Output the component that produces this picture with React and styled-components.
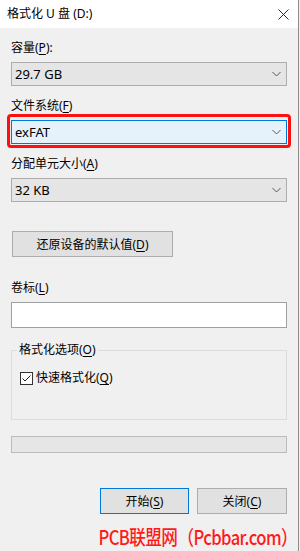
import React from "react";
import styled, { createGlobalStyle } from "styled-components";

const Global = createGlobalStyle`
  html, body { margin: 0; padding: 0; background: #f0f0f0; }
  body { width: 300px; height: 551px; overflow: hidden; }
  * { box-sizing: border-box; }
`;

const ui = `"Segoe UI", "Noto Sans", "Noto Sans CJK SC", sans-serif`;

const Window = styled.div`
  width: 299px;
  height: 551px;
  border-right: 1px solid #8c8c8c;
  background: #f0f0f0;
  font-family: ${ui};
  font-size: 12px;
  color: #000;
  display: flex;
  flex-direction: column;
`;

const TitleBar = styled.div`
  height: 28px;
  background: #fff;
  display: flex;
  align-items: center;
  justify-content: space-between;
  padding: 0 9px 0 7px;
  flex: none;
`;

const Title = styled.span`
  font-size: 12px;
  line-height: 16px;
  font-family: "Noto Sans", "Noto Sans CJK SC", sans-serif;
`;

const Content = styled.div`
  padding: 12px 11px 0 11px;
  display: flex;
  flex-direction: column;
`;

const Label = styled.div`
  line-height: 16px;
  height: 16px;
  margin-top: ${(p) => p.$mt || 0}px;
  white-space: nowrap;
  u { text-decoration: underline; text-underline-offset: 2px; }
`;

const ComboWrap = styled.div`
  position: relative;
  margin-top: 6px;
  ${(p) =>
    p.$marked &&
    `&::after {
      content: "";
      position: absolute;
      left: -4px; right: -4px; top: -6px; bottom: -4px;
      border: 3px solid #ff1010;
      border-radius: 4px;
      pointer-events: none;
    }`}
`;

const Combo = styled.div`
  height: 24px;
  border: 1px solid ${(p) => (p.$focus ? "#0078d7" : "#adadad")};
  background: ${(p) => (p.$focus ? "#e5f1fb" : "#e5e5e5")};
  display: flex;
  align-items: center;
  justify-content: space-between;
  padding: 0 5px 0 3px;
  font-family: "Noto Sans", "Noto Sans CJK SC", sans-serif;
  font-size: 13px;
`;

const Chevron = () => (
  <svg width="9" height="6" viewBox="0 0 9 6">
    <path d="M0.5 1 L4.5 5 L8.5 1" fill="none" stroke="#5a5a5a" strokeWidth="1" />
  </svg>
);

const Button = styled.button`
  height: 26px;
  width: ${(p) => p.$w}px;
  border: 1px solid ${(p) => (p.$default ? "#0078d7" : "#adadad")};
  background: #e1e1e1;
  font-family: ${ui};
  font-size: 12px;
  color: #000;
  padding: 0;
  margin: 0;
  display: flex;
  align-items: center;
  justify-content: center;
  u { text-decoration: underline; text-underline-offset: 2px; }
`;

const ResetButton = styled(Button)`
  margin-top: 29px;
  margin-left: 1px;
`;

const TextBox = styled.div`
  margin-top: 6px;
  height: 26px;
  background: #fff;
  border: 1px solid #a0a0a0;
`;

const Group = styled.div`
  position: relative;
  margin-top: 22px;
  height: 70px;
  border: 1px solid #dcdcdc;
  padding: 19px 8px 0 8px;
`;

const Legend = styled.span`
  position: absolute;
  top: -9px;
  left: 5px;
  padding: 0 2px;
  background: #f0f0f0;
  line-height: 16px;
  u { text-decoration: underline; text-underline-offset: 2px; }
`;

const CheckRow = styled.div`
  display: flex;
  align-items: center;
  gap: 3px;
  height: 16px;
  line-height: 16px;
  u { text-decoration: underline; text-underline-offset: 2px; }
`;

const Box = styled.span`
  width: 13px;
  height: 13px;
  border: 1px solid #333;
  background: #fff;
  display: inline-flex;
  align-items: center;
  justify-content: center;
  flex: none;
`;

const Progress = styled.div`
  margin-top: 16px;
  height: 17px;
  background: #e6e6e6;
  border: 1px solid #bcbcbc;
`;

const ButtonRow = styled.div`
  margin-top: 35px;
  display: flex;
  justify-content: flex-end;
  gap: 8px;
`;

const Watermark = styled.div`
  margin-top: 11px;
  margin-right: -10px;
  text-align: right;
  color: #ff1a1a;
  font-family: "Noto Sans CJK SC", sans-serif;
  font-weight: 500;
  font-size: 20px;
  line-height: 24px;
  white-space: nowrap;
  letter-spacing: -0.7px;
  transform: scaleX(0.83);
  transform-origin: right center;
`;

export default function App() {
  return (
    <>
      <Global />
      <Window>
        <TitleBar>
          <Title>格式化 U 盘 (D:)</Title>
          <svg width="11" height="11" viewBox="0 0 11 11">
            <path d="M0.5 0.5 L10.5 10.5 M10.5 0.5 L0.5 10.5" stroke="#2b2b2b" strokeWidth="1" fill="none" />
          </svg>
        </TitleBar>
        <Content>
          <Label>容量(<u>P</u>):</Label>
          <ComboWrap>
            <Combo>
              <span>29.7 GB</span>
              <Chevron />
            </Combo>
          </ComboWrap>

          <Label $mt={12}>文件系统(<u>F</u>)</Label>
          <ComboWrap $marked>
            <Combo $focus>
              <span>exFAT</span>
              <Chevron />
            </Combo>
          </ComboWrap>

          <Label $mt={12}>分配单元大小(<u>A</u>)</Label>
          <ComboWrap>
            <Combo>
              <span>32 KB</span>
              <Chevron />
            </Combo>
          </ComboWrap>

          <ResetButton $w={161}>还原设备的默认值(<u>D</u>)</ResetButton>

          <Label $mt={23}>卷标(<u>L</u>)</Label>
          <TextBox />

          <Group>
            <Legend>格式化选项(<u>O</u>)</Legend>
            <CheckRow>
              <Box>
                <svg width="11" height="11" viewBox="0 0 11 11">
                  <path d="M1.5 5.5 L4 8 L9.5 2.5" fill="none" stroke="#222" strokeWidth="1" />
                </svg>
              </Box>
              <span>快速格式化(<u>Q</u>)</span>
            </CheckRow>
          </Group>

          <Progress />

          <ButtonRow>
            <Button $w={89} $default>开始(<u>S</u>)</Button>
            <Button $w={90}>关闭(<u>C</u>)</Button>
          </ButtonRow>

          <Watermark>PCB联盟网（Pcbbar.com）</Watermark>
        </Content>
      </Window>
    </>
  );
}
